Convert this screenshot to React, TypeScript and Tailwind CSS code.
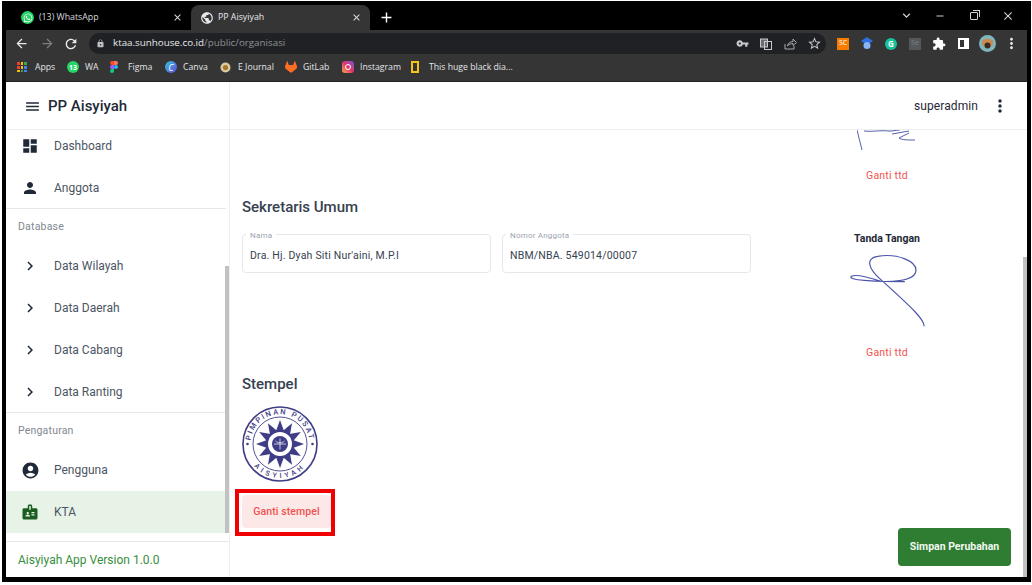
import React from 'react';
import {
  MdAccountCircle,
  MdAdd,
  MdArrowBack,
  MdArrowForward,
  MdBadge,
  MdChevronRight,
  MdClose,
  MdDashboard,
  MdExtension,
  MdKeyboardArrowDown,
  MdLock,
  MdMenu,
  MdMoreVert,
  MdPerson,
  MdPublic,
  MdRefresh,
  MdRemove,
  MdStarBorder,
  MdVpnKey,
} from 'react-icons/md';
import { FaWhatsapp } from 'react-icons/fa';
import { SiGitlab } from 'react-icons/si';

const WaIcon: React.FC<{ size: number }> = ({ size }) => (
  <span className="flex items-center justify-center rounded-full bg-[#25d366]" style={{ width: size, height: size }}>
    <span className="text-[7px] leading-none font-bold text-white">13</span>
  </span>
);

const Tab: React.FC<{ active?: boolean; icon: React.ReactNode; title: string }> = ({ active, icon, title }) => (
  <div
    className={
      active
        ? 'flex h-[25px] w-[179px] items-center rounded-t-lg bg-[#353535] pr-[8px] pl-[9px] text-[#e8eaed]'
        : 'flex h-[25px] w-[179px] items-center pr-[8px] pl-[9px] text-[#d8dadd]'
    }
  >
    <span className="flex w-[18px] items-center">{icon}</span>
    <span className="flex-1 text-[8.8px]">{title}</span>
    <MdClose size={11} className="text-[#dfe1e5]" />
  </div>
);

const AppsIcon = () => (
  <span className="grid h-[10px] w-[10px] grid-cols-3 gap-[1px]">
    {['#ea4335', '#fbbc04', '#34a853', '#ea4335', '#fbbc04', '#4285f4', '#fbbc04', '#34a853', '#4285f4'].map((c, i) => (
      <span key={i} style={{ backgroundColor: c }} />
    ))}
  </span>
);

const FigmaIcon = () => (
  <svg width="8" height="12" viewBox="0 0 8 12">
    <path d="M0 2a2 2 0 0 1 2-2h2v4H2a2 2 0 0 1-2-2z" fill="#f24e1e" />
    <path d="M4 0h2a2 2 0 0 1 0 4H4z" fill="#ff7262" />
    <path d="M0 6a2 2 0 0 1 2-2h2v4H2a2 2 0 0 1-2-2z" fill="#a259ff" />
    <circle cx="6" cy="6" r="2" fill="#1abcfe" />
    <path d="M0 10a2 2 0 0 1 2-2h2v2a2 2 0 0 1-4 0z" fill="#0acf83" />
  </svg>
);

const CanvaIcon = () => (
  <span className="flex h-[12px] w-[12px] items-center justify-center rounded-full bg-gradient-to-br from-[#18c5d8] to-[#5b3fd8] text-[9px] leading-none text-white italic">
    C
  </span>
);

const JournalIcon = () => (
  <svg width="11" height="11" viewBox="0 0 11 11">
    <circle cx="5.5" cy="5.5" r="5" fill="#d9c9a3" />
    <circle cx="5.5" cy="5.5" r="2.6" fill="#a8762a" />
  </svg>
);

const InstagramIcon = () => (
  <span className="flex h-[12px] w-[12px] items-center justify-center rounded-[3px] bg-gradient-to-tr from-[#f9a33a] via-[#e1306c] to-[#7a3fd0]">
    <span className="h-[6px] w-[6px] rounded-full border border-white" />
  </span>
);

const bookmarks: { icon: React.ReactNode; label: string; width: string }[] = [
  { icon: <AppsIcon />, label: 'Apps', width: 'w-[50px]' },
  { icon: <WaIcon size={12} />, label: 'WA', width: 'w-[43px]' },
  { icon: <FigmaIcon />, label: 'Figma', width: 'w-[55px]' },
  { icon: <CanvaIcon />, label: 'Canva', width: 'w-[55px]' },
  { icon: <JournalIcon />, label: 'E Journal', width: 'w-[65px]' },
  { icon: <SiGitlab size={12} className="text-[#fc6d26]" />, label: 'GitLab', width: 'w-[57px]' },
  { icon: <InstagramIcon />, label: 'Instagram', width: 'w-[69px]' },
  { icon: <span className="h-[12px] w-[8px] border-2 border-[#f5c518]" />, label: 'This huge black dia...', width: 'w-[110px]' },
];

const BrowserChrome = () => (
  <div className="shrink-0 font-['Open_Sans',sans-serif]">
    <div className="flex h-[29px] items-end bg-black pl-[6px]">
      <Tab icon={<span className="flex h-[13px] w-[13px] items-center justify-center rounded-full bg-[#25d366]"><FaWhatsapp size={10} className="text-white" /></span>} title="(13) WhatsApp" />
      <Tab active icon={<MdPublic size={14} className="text-[#e8eaed]" />} title="PP Aisyiyah" />
      <div className="flex h-[25px] w-[32px] items-center justify-center">
        <MdAdd size={17} className="text-white" />
      </div>
      <div className="ml-auto flex h-[29px] items-center pr-[2px] text-[#d0d2d6]">
        <span className="flex w-[34px] justify-center"><MdKeyboardArrowDown size={15} /></span>
        <span className="flex w-[34px] justify-center"><MdRemove size={12} /></span>
        <span className="flex w-[34px] justify-center">
          <span className="relative h-[8px] w-[8px] rounded-[1px] border border-[#d0d2d6]">
            <span className="absolute -top-[3px] -right-[3px] h-[7px] w-[7px] border-t border-r border-[#d0d2d6]" />
          </span>
        </span>
        <span className="flex w-[34px] justify-center"><MdClose size={14} /></span>
      </div>
    </div>
    <div className="flex h-[24px] items-start bg-[#353535] pt-[3px] pl-[3px]">
      <span className="flex h-[21px] w-[24px] items-center justify-center text-[#e8eaed]"><MdArrowBack size={15} /></span>
      <span className="ml-[2px] flex h-[21px] w-[24px] items-center justify-center text-[#7d7f82]"><MdArrowForward size={15} /></span>
      <span className="flex h-[21px] w-[24px] items-center justify-center text-[#e8eaed]"><MdRefresh size={16} /></span>
      <div className="ml-[6px] flex h-[21px] w-[737px] items-center rounded-l-full rounded-r-full bg-[#202124] pl-[7px] text-[9.8px]">
        <MdLock size={9} className="text-[#bdc1c6]" />
        <span className="ml-[8px] text-[#e8eaed]">ktaa.sunhouse.co.id</span>
        <span className="text-[#8f9296]">/public/organisasi</span>
        <div className="ml-auto flex items-center text-[#c8cacd]">
          <span className="flex w-[24px] justify-center"><MdVpnKey size={13} /></span>
          <span className="flex w-[24px] justify-center">
            <svg width="12" height="12" viewBox="0 0 12 12" fill="none" stroke="#c8cacd">
              <rect x="0.5" y="1" width="7" height="8" fill="#6b6e72" />
              <rect x="4.5" y="3.5" width="7" height="8" />
            </svg>
          </span>
          <span className="flex w-[24px] justify-center">
            <svg width="13" height="12" viewBox="0 0 13 12" fill="none" stroke="#a8abae" strokeWidth="1">
              <path d="M1 6v5h9V8" />
              <path d="M3.5 8c.5-3 3-4.500 5.500-4.500V1l3.500 3.500L9 7.500V5.500C6.500 5.500 5 6.500 3.500 8z" />
            </svg>
          </span>
          <span className="flex w-[24px] justify-center"><MdStarBorder size={15} /></span>
        </div>
      </div>
      <div className="ml-[5px] flex h-[21px] items-center">
        <span className="flex w-[24px] justify-center"><span className="flex h-[12px] w-[12px] items-center justify-center bg-[#f57c00] text-[7px] text-white">SC</span></span>
        <span className="flex w-[24px] justify-center">
          <svg width="12" height="13" viewBox="0 0 12 13">
            <path d="M6 0l6 4-6 4-6-4z" fill="#2f6fe0" />
            <circle cx="6" cy="8.500" r="3.500" fill="#8ab4f8" />
          </svg>
        </span>
        <span className="flex w-[24px] justify-center"><span className="flex h-[12px] w-[12px] items-center justify-center rounded-full bg-[#15c39a] text-[8px] leading-none font-bold text-white">G</span></span>
        <span className="flex w-[24px] justify-center"><span className="flex h-[12px] w-[12px] items-center justify-center bg-[#55585a] text-[7px] text-[#7c7f82]">Se</span></span>
        <span className="flex w-[24px] justify-center"><MdExtension size={14} className="text-white" /></span>
        <span className="flex w-[24px] justify-center"><span className="h-[11px] w-[11px] border-2 border-r-[5px] border-white" /></span>
        <span className="flex w-[24px] justify-center">
          <svg width="17" height="17" viewBox="0 0 17 17">
            <circle cx="8.500" cy="8.500" r="8.500" fill="#7fb6bb" />
            <path d="M3 6c2-3 9-3 11 0v3c-1 4-10 4-11 0z" fill="#c98a52" />
            <circle cx="8.500" cy="10.500" r="3" fill="#3a2a20" />
          </svg>
        </span>
        <span className="flex w-[24px] justify-center"><MdMoreVert size={17} className="text-[#e8eaed]" /></span>
      </div>
    </div>
    <div className="flex h-[28px] items-center border-b border-[#202124] bg-[#353535] pl-[11px] text-[8.7px] text-[#e3e5e8]">
      {bookmarks.map((b) => (
        <div key={b.label} className={`flex items-center ${b.width}`}>
          <span className="flex w-[18px] items-center">{b.icon}</span>
          <span className="whitespace-nowrap">{b.label}</span>
        </div>
      ))}
    </div>
  </div>
);

const NavRow: React.FC<{ icon: React.ReactNode; label: string; active?: boolean }> = ({ icon, label, active }) => (
  <div className={active ? 'mt-px flex h-[42px] items-center gap-3 bg-[#e8f3e8] px-3' : 'flex h-[42px] items-center gap-3 px-3 pt-[2px]'}>
    <span className="flex w-6 justify-center text-[#1f2937]">{icon}</span>
    <span className="text-[12px] text-[#4b5563]">{label}</span>
  </div>
);

const Sidebar = () => (
  <aside className="flex w-[224px] shrink-0 flex-col border-r border-[#eeeeee]">
    <div className="flex h-[48px] shrink-0 items-center gap-[7px] border-b border-[#eeeeee] pt-[2px] pl-[18px]">
      <MdMenu size={17} className="text-[#1f2937]" />
      <span className="text-[15px] font-medium text-[#1f2937]">PP Aisyiyah</span>
    </div>
    <div className="relative flex-1 overflow-hidden">
      <nav className="-mt-[6px] w-[220px]">
        <NavRow icon={<MdDashboard size={18} />} label="Dashboard" />
        <NavRow icon={<MdPerson size={18} />} label="Anggota" />
        <div className="border-t border-[#e5e7eb]" />
        <div className="flex h-[35px] items-center px-3 text-[10.5px] tracking-[0.2px] text-[#808890]">Database</div>
        <NavRow icon={<MdChevronRight size={18} />} label="Data Wilayah" />
        <NavRow icon={<MdChevronRight size={18} />} label="Data Daerah" />
        <NavRow icon={<MdChevronRight size={18} />} label="Data Cabang" />
        <NavRow icon={<MdChevronRight size={18} />} label="Data Ranting" />
        <div className="border-t border-[#e5e7eb]" />
        <div className="flex h-[35px] items-center px-3 text-[10.5px] tracking-[0.2px] text-[#808890]">Pengaturan</div>
        <NavRow icon={<MdAccountCircle size={19} />} label="Pengguna" />
        <NavRow icon={<MdBadge size={18} className="text-[#1b5e20]" />} label="KTA" active />
      </nav>
      <div className="absolute top-[136px] right-0 h-[267px] w-[4px] bg-[#c1c1c1]" />
    </div>
    <div className="flex h-[36px] shrink-0 items-center border-t border-[#e5e7eb] pl-3 text-[12px] text-[#388e3c]">
      Aisyiyah App Version 1.0.0
    </div>
  </aside>
);

const Field: React.FC<{ label: string; value: string }> = ({ label, value }) => (
  <div className="relative flex h-[39px] w-[249px] items-center rounded border border-[#e5e7eb] px-[7px] pt-[5px] text-[10.5px] tracking-[0.2px] text-[#374151]">
    <span className="absolute -top-[4px] left-[3px] bg-white px-[4px] text-[8px] leading-[10px] text-[#9ca3af]">{label}</span>
    {value}
  </div>
);

const Seal = () => (
  <svg width="76" height="76" viewBox="0 0 76 76" fill="none" stroke="#3f3d85">
    <defs>
      <path id="seal-top" d="M10 47A29.500 29.500 0 1 1 66 47" />
      <path id="seal-bottom" d="M6 49.500A34 34 0 0 0 70 49.500" />
    </defs>
    <circle cx="38" cy="38" r="37" strokeWidth="1.600" />
    <circle cx="38" cy="38" r="27" strokeWidth="0.900" />
    <text fontSize="7.500" fontFamily="Roboto, sans-serif" fontWeight="500" fill="#3f3d85" stroke="none" letterSpacing="1.800" textAnchor="middle">
      <textPath href="#seal-top" startOffset="50%">PIMPINAN PUSAT</textPath>
    </text>
    <text fontSize="7" fontFamily="Roboto, sans-serif" fontWeight="500" fill="#3f3d85" stroke="none" letterSpacing="3.500" textAnchor="middle">
      <textPath href="#seal-bottom" startOffset="50%">AISYIYAH</textPath>
    </text>
    <g fill="#3f3d85" stroke="none">
      {Array.from({ length: 12 }, (_, i) => (
        <path key={i} d="M34 25L38 14l4 11z" transform={`rotate(${i * 30} 38 38)`} />
      ))}
      <circle cx="38" cy="38" r="14" />
      <circle cx="38" cy="38" r="12" fill="#ffffff" />
      <circle cx="38" cy="38" r="8" />
      <circle cx="5.500" cy="38" r="1.300" />
      <circle cx="70.500" cy="38" r="1.300" />
    </g>
    <path d="M32 38h12M38 32.500v11M33.500 35c3 2.500 6 2.500 9 0" stroke="#ffffff" strokeWidth="0.700" />
  </svg>
);

const App: React.FC = () => {
  return (
    <div className="h-[585px] w-[1032px] overflow-hidden bg-white pt-px pl-[2px] font-['Roboto',sans-serif]">
      <div className="flex h-[581px] w-[1029px] flex-col bg-black px-1 pb-[5px]">
        <BrowserChrome />
        <div className="flex min-h-0 flex-1 bg-white">
          <Sidebar />
          <main className="relative flex min-w-0 flex-1 flex-col">
            <header className="flex h-[48px] shrink-0 items-center justify-end border-b border-[#eeeeee] pr-[17px]">
              <span className="text-[12px] tracking-[0.1px] text-[#1f2937]">superadmin</span>
              <MdMoreVert size={20} className="ml-[12px] text-[#1f2937]" />
            </header>
            <div className="relative flex-1 overflow-hidden px-3">
              <div className="flex">
                <div className="w-[509px]" />
                <div className="ml-[49px] flex w-[174px] flex-col items-center">
                  <svg width="60" height="21" viewBox="0 0 60 21" fill="none" stroke="#5560ad" strokeWidth="1">
                    <path d="M0 0l5 20M7 1c8 1 18-1 24 0c4 .5 8-1 12-1M35 4L52 1M52 3L42 8c3 2 8 2 16 2" />
                  </svg>
                  <span className="mt-[17px] text-[10.5px] tracking-[0.2px] text-[#ef5350]">Ganti ttd</span>
                </div>
              </div>
              <div className="mt-[6px] flex">
                <div className="w-[509px]">
                  <h2 className="mt-[7px] text-[15px] leading-[20px] font-medium text-[#374151]">Sekretaris Umum</h2>
                  <div className="mt-[17px] flex gap-[11px]">
                    <Field label="Nama" value="Dra. Hj. Dyah Siti Nur'aini, M.P.I" />
                    <Field label="Nomor Anggota" value="NBM/NBA. 549014/00007" />
                  </div>
                </div>
                <div className="ml-[49px] flex w-[174px] flex-col items-center pt-[41px]">
                  <span className="text-[10.5px] font-bold text-[#1f2937]">Tanda Tangan</span>
                  <svg className="mt-[6px]" width="77" height="75" viewBox="55 370 230 225" fill="none" stroke="#4a55a8" strokeWidth="3.600">
                    <path d="M280 590C280 570 250 540 150 450C110 415 105 385 140 380C200 370 260 395 255 425C250 455 180 460 100 452C70 450 55 445 62 440C75 432 120 445 150 455L222 456" />
                  </svg>
                  <span className="mt-[17px] text-[10.5px] tracking-[0.2px] text-[#ef5350]">Ganti ttd</span>
                </div>
              </div>
              <h2 className="mt-[14px] text-[15px] leading-[20px] font-medium text-[#374151]">Stempel</h2>
              <div className="mt-[12px]">
                <Seal />
              </div>
              <button
                type="button"
                className="mt-[13px] h-[33px] w-[89px] rounded bg-[#fde8e8] text-[10.5px] font-medium tracking-[0.1px] text-[#ef5350]"
              >
                Ganti stempel
              </button>
              {/* red marker from the annotated screenshot */}
              <div className="absolute top-[359px] left-[5px] h-[47px] w-[100px] border-4 border-[#f00000]" />
              <button
                type="button"
                className="absolute right-[16px] bottom-[11px] h-[38px] w-[113px] rounded bg-[#2e7d32] text-[10.5px] font-bold text-[#f1f8f1]"
              >
                Simpan Perubahan
              </button>
              <div className="absolute top-[127px] right-0 bottom-0 w-[4px] bg-[#c1c1c1]" />
            </div>
          </main>
        </div>
      </div>
    </div>
  );
};

export default App;
